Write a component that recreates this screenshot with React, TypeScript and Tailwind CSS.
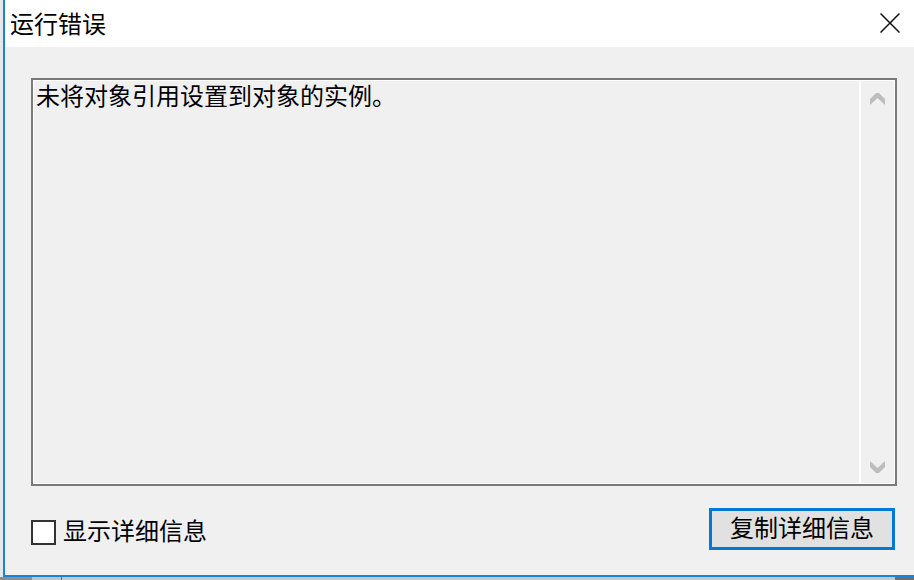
const font = "font-['Noto_Sans_CJK_SC','Noto_Sans',sans-serif]";

const ChevronUp = () => (
  <svg width="15" height="12" viewBox="0 0 15 12">
    <polygon points="0,6 6,0 9,0 15,6 15,12 7.5,5 0,12" fill="#bdbdbd" />
  </svg>
);

const ChevronDown = () => (
  <svg width="15" height="12" viewBox="0 0 15 12">
    <polygon points="0,0 7.5,7 15,0 15,6 9,12 6,12 0,6" fill="#bdbdbd" />
  </svg>
);

const App = () => {
  return (
    <div className={`flex h-[580px] w-[914px] flex-col overflow-hidden bg-[#d4d4d4] text-black ${font}`}>
      <div className="flex min-h-0 flex-1">
        {/* desktop sliver on the left */}
        <div className="w-[3px] bg-[#e8e8e8]" />

        {/* window */}
        <div className="flex flex-1 flex-col border-b-2 border-l-2 border-[#1883d7] bg-[#f0f0f0]">
          {/* title bar */}
          <div className="flex h-[47px] items-center justify-between bg-white pb-[2px] pl-[5px] pr-[14px]">
            <span className="text-[24px] leading-[28px]">运行错误</span>
            <svg width="20" height="20" viewBox="0 0 20 20">
              <path d="M0.5 0.5 L19.5 19.5 M19.5 0.5 L0.5 19.5" stroke="#111" strokeWidth="1.5" />
            </svg>
          </div>

          {/* body */}
          <div className="flex flex-col pl-[26px] pt-[31px]">
            <div className="h-[408px] w-[866px] border-2 border-[#7a7a7a]">
              <div className="flex h-full border border-white">
                <div className="flex-1 pl-[2px] pt-[1px] text-[24px] leading-[26px]">
                  未将对象引用设置到对象的实例。
                </div>
                <div className="flex w-[35px] flex-col items-center justify-between border-l-2 border-white pb-[10px] pt-[12px]">
                  <ChevronUp />
                  <ChevronDown />
                </div>
              </div>
            </div>

            <div className="mt-[22px] flex w-[864px] items-start justify-between">
              <label className="mt-[9px] flex items-center gap-[7px]">
                <span className="h-[25px] w-[25px] border-2 border-[#333333] bg-white" />
                <span className="mb-[4px] text-[24px] leading-[26px]">显示详细信息</span>
              </label>
              <button className="flex h-[42px] w-[186px] items-center justify-center border-[3px] border-[#0078d7] bg-[#e1e1e1] pb-[4px] text-[24px] leading-[26px]">
                复制详细信息
              </button>
            </div>
          </div>
        </div>
      </div>

      {/* desktop strip below the window */}
      <div className="flex h-[3px]">
        <div className="w-[32px] bg-[#8f8f8f]" />
        <div className="w-[29px] bg-[#c4c4c4]" />
        <div className="w-[1px] bg-[#6a6a6a]" />
        <div className="flex-1 bg-[#c9c9c9]" />
        <div className="w-[19px] bg-[#6e6e6e]" />
      </div>
    </div>
  );
};

export default App;
